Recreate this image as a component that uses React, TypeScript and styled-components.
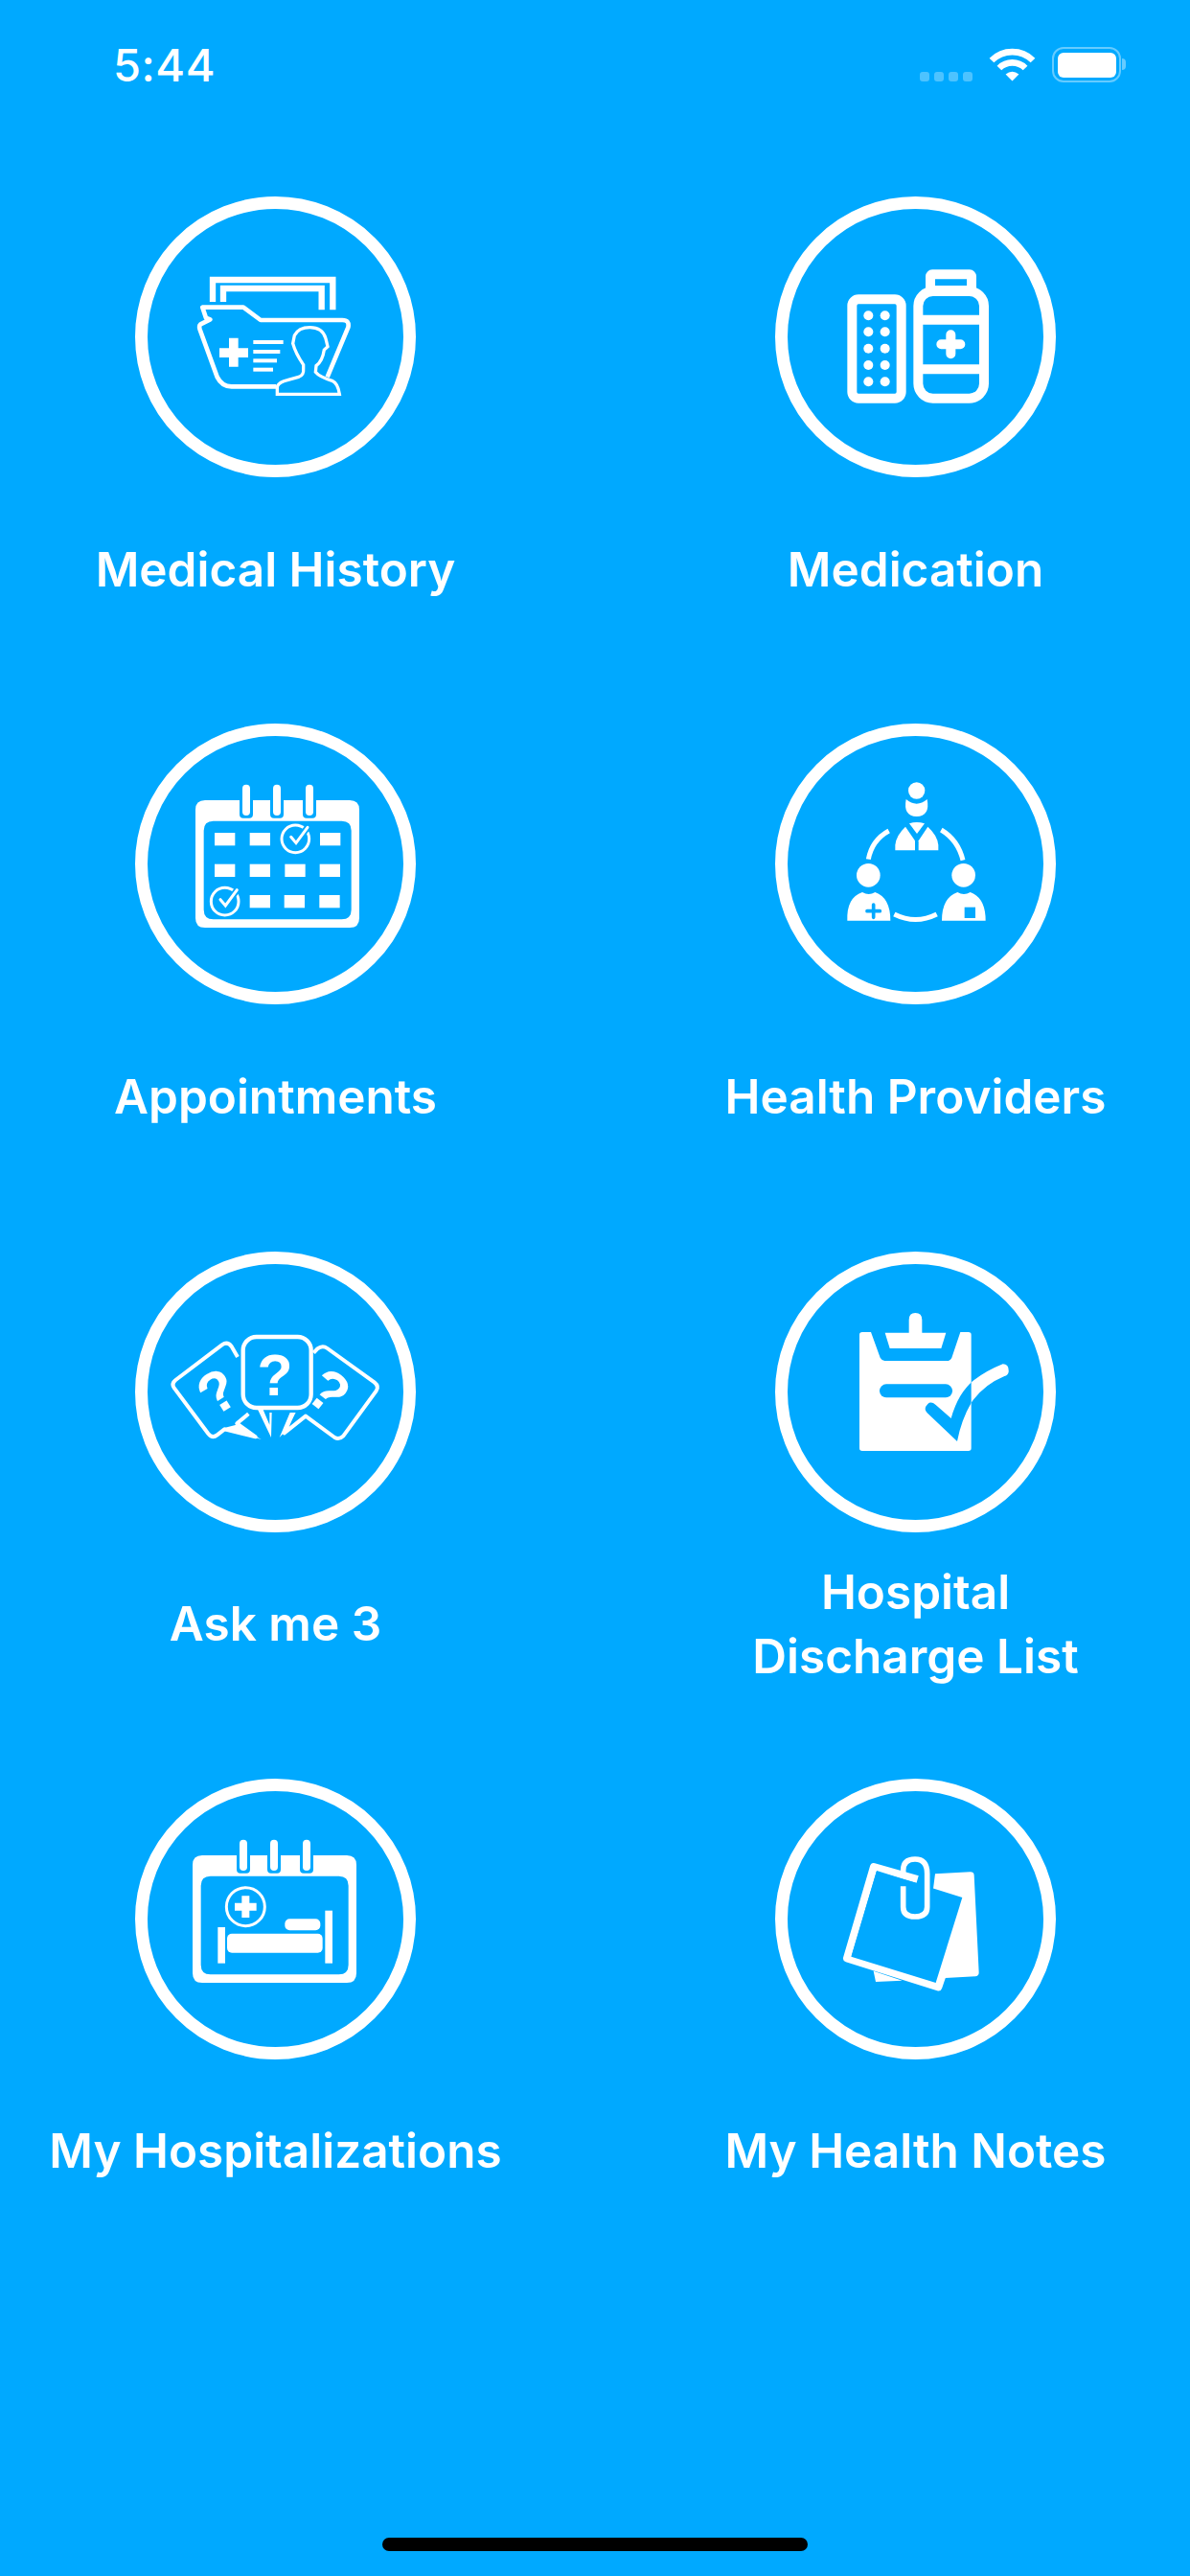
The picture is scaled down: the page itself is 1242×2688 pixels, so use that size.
import React from 'react';
import styled, { createGlobalStyle } from 'styled-components';

const BLUE = '#00a9ff';

const GlobalStyle = createGlobalStyle`
  html, body {
    margin: 0;
    padding: 0;
    background: ${BLUE};
  }
`;

const Page = styled.div`
  width: 1242px;
  height: 2688px;
  display: flex;
  flex-direction: column;
  background: ${BLUE};
  color: #fff;
  font-family: Inter, "Liberation Sans", sans-serif;
  overflow: hidden;
`;

const StatusBar = styled.div`
  height: 205px;
  flex: none;
  box-sizing: border-box;
  padding: 49px 72px 0 118px;
  display: flex;
  justify-content: space-between;
  align-items: flex-start;
`;

const Time = styled.div`
  font-size: 47px;
  font-weight: 500;
  line-height: 38px;
  letter-spacing: 0.5px;
`;

const StatusIcons = styled.div`
  display: flex;
  align-items: flex-start;
`;

const SignalDots = styled.div`
  display: flex;
  gap: 5px;
  margin-top: 26px;
  margin-right: 17px;
`;

const SignalDot = styled.span`
  width: 10px;
  height: 10px;
  border-radius: 3px;
  background: rgba(255, 255, 255, 0.3);
`;

const Wifi = styled.svg`
  width: 49px;
  height: 36px;
  margin-right: 17px;
`;

const Battery = styled.div`
  position: relative;
  width: 72px;
  height: 37px;
  box-sizing: border-box;
  padding: 3.5px;
  border: 2.5px solid rgba(255, 255, 255, 0.4);
  border-radius: 12px;
`;

const BatteryFill = styled.div`
  height: 100%;
  border-radius: 6px;
  background: #fff;
`;

const BatteryTip = styled.div`
  position: absolute;
  right: -7px;
  top: 10px;
  width: 4px;
  height: 12px;
  border-radius: 0 6px 6px 0;
  background: rgba(255, 255, 255, 0.4);
`;

const Menu = styled.div`
  display: grid;
  grid-template-columns: 561px 561px;
  grid-auto-rows: 550.33px;
  column-gap: 107px;
  padding: 0 6px 0 7px;
`;

const Tile = styled.div`
  display: flex;
  flex-direction: column;
  align-items: center;
`;

const Ring = styled.div`
  width: 293px;
  height: 293px;
  box-sizing: border-box;
  border: 13px solid #fff;
  border-radius: 50%;
  flex: none;
`;

const Icon = styled.svg`
  display: block;
  width: 269px;
  height: 269px;
  margin: -1px;
  overflow: visible;
`;

const Label = styled.div`
  margin-top: 41px;
  height: 110px;
  display: flex;
  align-items: center;
  text-align: center;
  font-size: 49.5px;
  font-weight: 600;
  line-height: 67px;
`;

const HomeIndicator = styled.div`
  width: 444px;
  height: 14px;
  flex: none;
  margin: auto auto 26px;
  border-radius: 7px;
  background: #000;
`;

const Rows = ({ x, y, w, h }: { x: number[]; y: number; w: number; h: number }) => (
  <>
    {x.map(left => (
      <rect key={left} x={left} y={y} width={w} height={h} fill="#fff" />
    ))}
  </>
);

const CalendarFrame = ({ dx, dy }: { dx: number; dy: number }) => (
  <g transform={`translate(${dx} ${dy})`}>
    <path
      fillRule="evenodd"
      fill="#fff"
      d="M282 285H735Q765 285 765 315V654Q765 684 735 684H282Q252 684 252 654V315Q252 285 282 285ZM308 350Q278 350 278 380V628Q278 658 308 658H710Q740 658 740 628V380Q740 350 710 350Z"
    />
    {[411, 507, 609].map(cx => (
      <g key={cx}>
        <rect x={cx - 21} y={270} width={42} height={71} rx={12} fill={BLUE} />
        <rect x={cx - 12} y={236} width={24} height={97} rx={12} fill="#fff" />
      </g>
    ))}
  </g>
);

const CheckMark = ({ cx, cy }: { cx: number; cy: number }) => (
  <g fill="none" strokeLinecap="round">
    <circle cx={cx} cy={cy} r={43} stroke="#fff" strokeWidth={9} />
    <path d={`M${cx - 14} ${cy - 6}L${cx + 2} ${cy + 13}L${cx + 38} ${cy - 36}`} stroke={BLUE} strokeWidth={20} />
    <path d={`M${cx - 14} ${cy - 6}L${cx + 2} ${cy + 13}L${cx + 38} ${cy - 36}`} stroke="#fff" strokeWidth={9} />
  </g>
);

const FolderIcon = () => (
  <Icon viewBox="99 81 807 807">
    <g fill="none" stroke="#fff">
      <path d="M306 375V306H682V400M339 375V333H647V400" strokeWidth={19} />
      <path
        strokeWidth={14}
        strokeLinejoin="round"
        d="M505 640H365Q335 640 320 610L266 462Q262 450 268 445L298 430L285 425L274 392H402L456 432H712Q735 432 730 455L665 610"
      />
      <path
        strokeWidth={10}
        d="M508 664V640Q515 625 540 620L575 610Q592 605 590 585V572Q565 535 557 505L562 480Q575 455 610 455Q650 455 660 490L666 515L655 525Q650 560 630 575L628 595Q640 610 680 622Q698 630 703 664Z"
      />
    </g>
    <path fill="#fff" d="M357 488H386V520H417V549H386V578H357V549H327V520H357Z" />
    <Rows x={[433]} y={495} w={94} h={12} />
    <Rows x={[433]} y={525} w={84} h={12} />
    <Rows x={[433]} y={553} w={74} h={12} />
    <Rows x={[433]} y={581} w={62} h={12} />
  </Icon>
);

const MedicationIcon = () => (
  <Icon viewBox="93 81 807 807">
    <g fill="none" stroke="#fff" strokeWidth={30}>
      <rect x={298} y={367} width={154} height={310} rx={20} />
      <rect x={505} y={342} width={206} height={335} rx={46} />
      <rect x={543} y={289} width={129} height={50} rx={6} />
      <path d="M505 431H711M505 586H711" />
      <path d="M577 508H637M607 478V538" strokeLinecap="round" />
    </g>
    {[418, 469, 521, 573, 625].map(cy => (
      <g key={cy} fill="#fff">
        <circle cx={349} cy={cy} r={15} />
        <circle cx={401} cy={cy} r={15} />
      </g>
    ))}
  </Icon>
);

const CalendarIcon = () => (
  <Icon viewBox="99 81 807 807">
    <CalendarFrame dx={0} dy={0} />
    <Rows x={[312, 422, 642]} y={387} w={64} h={40} />
    <Rows x={[312, 422, 532, 641]} y={485} w={64} h={40} />
    <Rows x={[422, 530, 640]} y={582} w={64} h={40} />
    <CheckMark cx={565} cy={406} />
    <CheckMark cx={344} cy={602} />
  </Icon>
);

const ProvidersIcon = () => (
  <Icon viewBox="93 81 807 807">
    <g fill="#fff">
      <circle cx={500} cy={255} r={26} />
      <path d="M467 282Q500 310 533 282Q543 335 500 336Q457 335 467 282Z" />
      <path d="M477 358Q500 350 525 358L501 390Z" />
      <path d="M433 442V425Q436 395 465 368L495 412V442Z" />
      <path d="M568 442V425Q565 395 535 368L506 412V442Z" />
      <circle cx={349} cy={520} r={37} />
      <path d="M283 662Q280 590 330 573Q350 585 370 573Q418 590 418 662Z" />
      <circle cx={647} cy={520} r={37} />
      <path d="M579 662Q579 590 628 573Q648 585 668 573Q716 590 716 662Z" />
    </g>
    <path d="M345 632H385M365 612V652" stroke={BLUE} strokeWidth={11} strokeLinecap="round" />
    <rect x={650} y={620} width={34} height={34} fill={BLUE} />
    <path
      d="M413 381Q360 410 349 470M577 378Q630 410 645 473M430 642Q497 675 563 642"
      fill="none"
      stroke="#fff"
      strokeWidth={15}
    />
  </Icon>
);

const QuestionMark = styled.text`
  font-family: "Liberation Sans", sans-serif;
  font-weight: 700;
  font-size: 182px;
  fill: #fff;
  text-anchor: middle;
`;

const QuestionsIcon = () => (
  <Icon viewBox="99 84 807 807">
    <g fill="none" stroke="#fff" strokeWidth={12} strokeLinejoin="round">
      <rect x={401} y={315} width={213} height={222} rx={42} strokeWidth={13} />
      <path d="M384 378L365 345Q352 328 335 340L190 450Q175 462 186 476L292 618Q305 634 320 622L343 604L440 628L382 586L418 556" />
      <path d="M622 365L634 352Q650 340 665 351L812 457Q828 470 818 484L715 625Q702 638 688 630L597 563L530 616L556 556" />
    </g>
    <path fill="#fff" d="M342 600L458 636L380 590ZM446 540L464 543L484 590V552H491L489 630ZM515 630L548 552H566L535 608Z" />
    <QuestionMark x={501} y={498}>?</QuestionMark>
    <QuestionMark x={0} y={0} transform="translate(355 540) rotate(-32)">?</QuestionMark>
    <QuestionMark x={0} y={0} transform="translate(630 535) rotate(38)">?</QuestionMark>
  </Icon>
);

const CHECK_PATH =
  'M535 525Q545 515 560 528L608 570Q630 490 680 450Q720 420 770 400Q790 400 788 425Q786 435 775 438Q710 465 672 520Q640 575 627 642L533 553Q520 540 535 525Z';

const ChecklistIcon = () => (
  <Icon viewBox="93 84 807 807">
    <defs>
      <clipPath id="outside-board">
        <rect x={671} y={380} width={140} height={280} />
      </clipPath>
    </defs>
    <path
      fill="#fff"
      d="M321 308Q321 300 330 300H357L386 380Q392 390 400 390H595Q605 390 610 380L637 300H662Q671 300 671 308V664Q671 672 662 672H330Q321 672 321 664Z"
    />
    <path fill="#fff" d="M401 302H476V262Q476 240 496 240Q517 240 517 262V302H592L577 351H416Z" />
    <path d="M405 484H591" stroke={BLUE} strokeWidth={42} strokeLinecap="round" />
    <path d={CHECK_PATH} fill={BLUE} />
    <path d={CHECK_PATH} fill="#fff" clipPath="url(#outside-board)" />
  </Icon>
);

const HospitalIcon = () => (
  <Icon viewBox="99 84 807 807">
    <CalendarFrame dx={-9} dy={3} />
    <circle cx={409} cy={449} r={60} fill="none" stroke="#fff" strokeWidth={9} />
    <path fill="#fff" d="M397 415H421V437H443V461H421V483H397V461H375V437H397Z" />
    <rect x={532} y={487} width={111} height={36} rx={15} fill="#fff" />
    <rect x={351} y={533} width={299} height={60} rx={15} fill="#fff" />
    <rect x={322} y={513} width={23} height={113} fill="#fff" />
    <rect x={658} y={461} width={23} height={165} fill="#fff" />
  </Icon>
);

const NotesIcon = () => (
  <Icon viewBox="93 84 807 807">
    <g fill="#fff">
      <path d="M558 346L668 340Q679 340 680 350L695 655Q695 666 684 667L590 672L560 690L552 392Z" />
      <path d="M365 650L372 684L455 680Z" />
    </g>
    <path
      d="M503 363L366 324L282 610L568 700L592 630"
      fill="none"
      stroke="#fff"
      strokeWidth={24}
      strokeLinejoin="round"
    />
    <path d="M375 336L295 605L560 687L643 420Z" fill={BLUE} />
    <path
      d="M458 385V450Q458 480 495 480Q533 480 533 450V345Q533 300 495 300Q458 300 458 335V345"
      fill="none"
      stroke="#fff"
      strokeWidth={17}
    />
  </Icon>
);

const items: { label: React.ReactNode; icon: React.ReactNode }[] = [
  { label: 'Medical History', icon: <FolderIcon /> },
  { label: 'Medication', icon: <MedicationIcon /> },
  { label: 'Appointments', icon: <CalendarIcon /> },
  { label: 'Health Providers', icon: <ProvidersIcon /> },
  { label: 'Ask me 3', icon: <QuestionsIcon /> },
  { label: <span>Hospital<br />Discharge List</span>, icon: <ChecklistIcon /> },
  { label: 'My Hospitalizations', icon: <HospitalIcon /> },
  { label: 'My Health Notes', icon: <NotesIcon /> },
];

export default function App() {
  return (
    <Page>
      <GlobalStyle />
      <StatusBar>
        <Time>5:44</Time>
        <StatusIcons>
          <SignalDots>
            <SignalDot />
            <SignalDot />
            <SignalDot />
            <SignalDot />
          </SignalDots>
          <Wifi viewBox="335 58 148 108">
            <path d="M344 100A92 92 0 0 1 474 100M368 124A58 58 0 0 1 450 124" fill="none" stroke="#fff" strokeWidth={20} />
            <path d="M409 165L388 144Q409 127 430 144Z" fill="#fff" />
          </Wifi>
          <Battery>
            <BatteryFill />
            <BatteryTip />
          </Battery>
        </StatusIcons>
      </StatusBar>
      <Menu>
        {items.map((item, i) => (
          <Tile key={i}>
            <Ring>{item.icon}</Ring>
            <Label>{item.label}</Label>
          </Tile>
        ))}
      </Menu>
      <HomeIndicator />
    </Page>
  );
}
